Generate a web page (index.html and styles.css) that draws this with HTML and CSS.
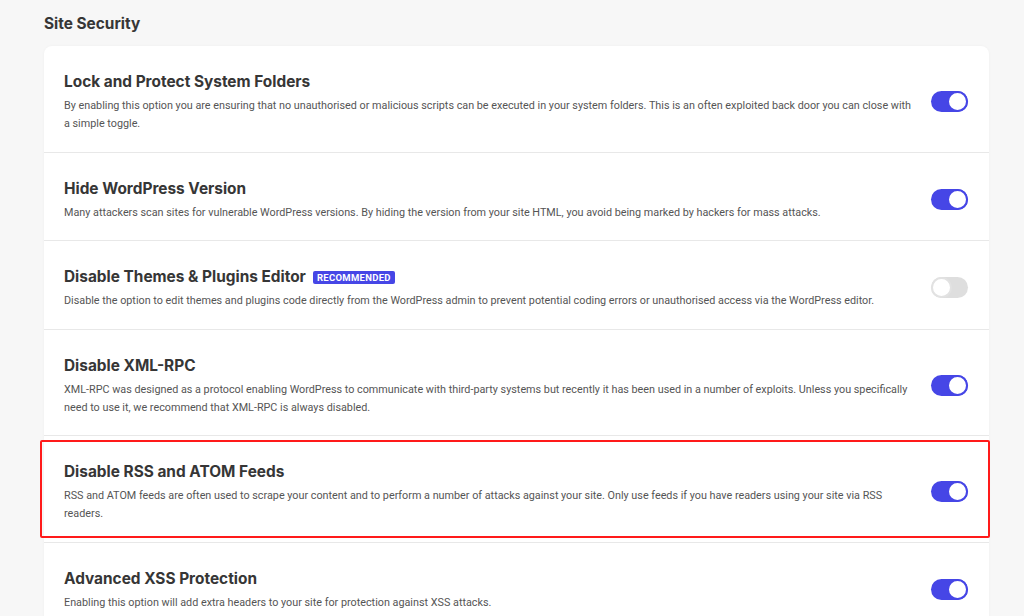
FILE: index.html
```html
<!DOCTYPE html>
<html lang="en">
<head>
    <meta charset="UTF-8">
    <title>Site Security</title>
    <link rel="stylesheet" href="styles.css">
</head>
<body>
    <main class="page">
        <h2 class="section-title">Site Security</h2>

        <div class="card">
            <div class="option">
                <div class="option-text">
                    <h3>Lock and Protect System Folders</h3>
                    <p>By enabling this option you are ensuring that no unauthorised or malicious scripts can be executed in your system folders. This is an often exploited back door you can close with a simple toggle.</p>
                </div>
                <span class="toggle on"></span>
            </div>

            <div class="option">
                <div class="option-text">
                    <h3>Hide WordPress Version</h3>
                    <p>Many attackers scan sites for vulnerable WordPress versions. By hiding the version from your site HTML, you avoid being marked by hackers for mass attacks.</p>
                </div>
                <span class="toggle on"></span>
            </div>

            <div class="option">
                <div class="option-text">
                    <h3>Disable Themes &amp; Plugins Editor <span class="badge">Recommended</span></h3>
                    <p>Disable the option to edit themes and plugins code directly from the WordPress admin to prevent potential coding errors or unauthorised access via the WordPress editor.</p>
                </div>
                <span class="toggle"></span>
            </div>

            <div class="option">
                <div class="option-text">
                    <h3>Disable XML-RPC</h3>
                    <p>XML-RPC was designed as a protocol enabling WordPress to communicate with third-party systems but recently it has been used in a number of exploits. Unless you specifically need to use it, we recommend that XML-RPC is always disabled.</p>
                </div>
                <span class="toggle on"></span>
            </div>

            <div class="option highlighted">
                <div class="option-text">
                    <h3>Disable RSS and ATOM Feeds</h3>
                    <p>RSS and ATOM feeds are often used to scrape your content and to perform a number of attacks against your site. Only use feeds if you have readers using your site via RSS readers.</p>
                </div>
                <span class="toggle on"></span>
            </div>

            <div class="option">
                <div class="option-text">
                    <h3>Advanced XSS Protection</h3>
                    <p>Enabling this option will add extra headers to your site for protection against XSS attacks.</p>
                </div>
                <span class="toggle on"></span>
            </div>
        </div>
    </main>
</body>
</html>
```

FILE: styles.css
```css
*, *::before, *::after {
    margin: 0;
    padding: 0;
    box-sizing: border-box;
}

body {
    background-color: #f7f7f7;
    font-family: Roboto, 'Liberation Sans', sans-serif;
    color: #363636;
    overflow: hidden;
}

.page {
    padding: 12px 35px 0 44px;
}

.section-title {
    font-family: Inter, 'Open Sans', sans-serif;
    font-size: 15.4px;
    font-weight: 700;
    line-height: 24px;
    color: #363636;
    margin-bottom: 10px;
}

.card {
    background-color: white;
    border-radius: 8px;
    box-shadow: 0 0 3px rgba(0, 0, 0, 0.04);
}

.option {
    position: relative;
    display: flex;
    align-items: center;
    gap: 18px;
    padding: 24px 21px 18.5px 20px;
    border-bottom: 1px solid #e8e8e8;
}

.option:last-child {
    border-bottom: none;
}

.option-text {
    flex: 1;
}

.option h3 {
    font-family: Inter, 'Open Sans', sans-serif;
    font-size: 15.4px;
    font-weight: 700;
    line-height: 24px;
    color: #363636;
    margin-bottom: 3px;
    display: flex;
    align-items: center;
    gap: 7px;
}

.option p {
    font-size: 10.8px;
    line-height: 18px;
    color: #555;
}

/* Annotation outline */
.highlighted::after {
    content: '';
    position: absolute;
    top: 4px;
    bottom: 4px;
    left: -4px;
    right: -1px;
    border: 2px solid #ff1a1a;
    border-radius: 2px;
}

.badge {
    display: inline-block;
    background-color: #4646e6;
    color: white;
    font-family: Roboto, sans-serif;
    font-size: 9.5px;
    font-weight: 700;
    line-height: 13px;
    padding: 0 4px;
    border-radius: 2px;
    text-transform: uppercase;
    letter-spacing: 0.3px;
}

/* Toggle switch */
.toggle {
    position: relative;
    flex: none;
    width: 37px;
    height: 21px;
    border-radius: 11px;
    background-color: #dedede;
}

.toggle::after {
    content: '';
    position: absolute;
    top: 0;
    left: 0;
    width: 21px;
    height: 21px;
    border-radius: 50%;
    background-color: white;
    border: 2px solid #e2e2e2;
}

.toggle.on {
    background-color: #4646e6;
}

.toggle.on::after {
    left: 16px;
    border-color: #4646e6;
}
```
